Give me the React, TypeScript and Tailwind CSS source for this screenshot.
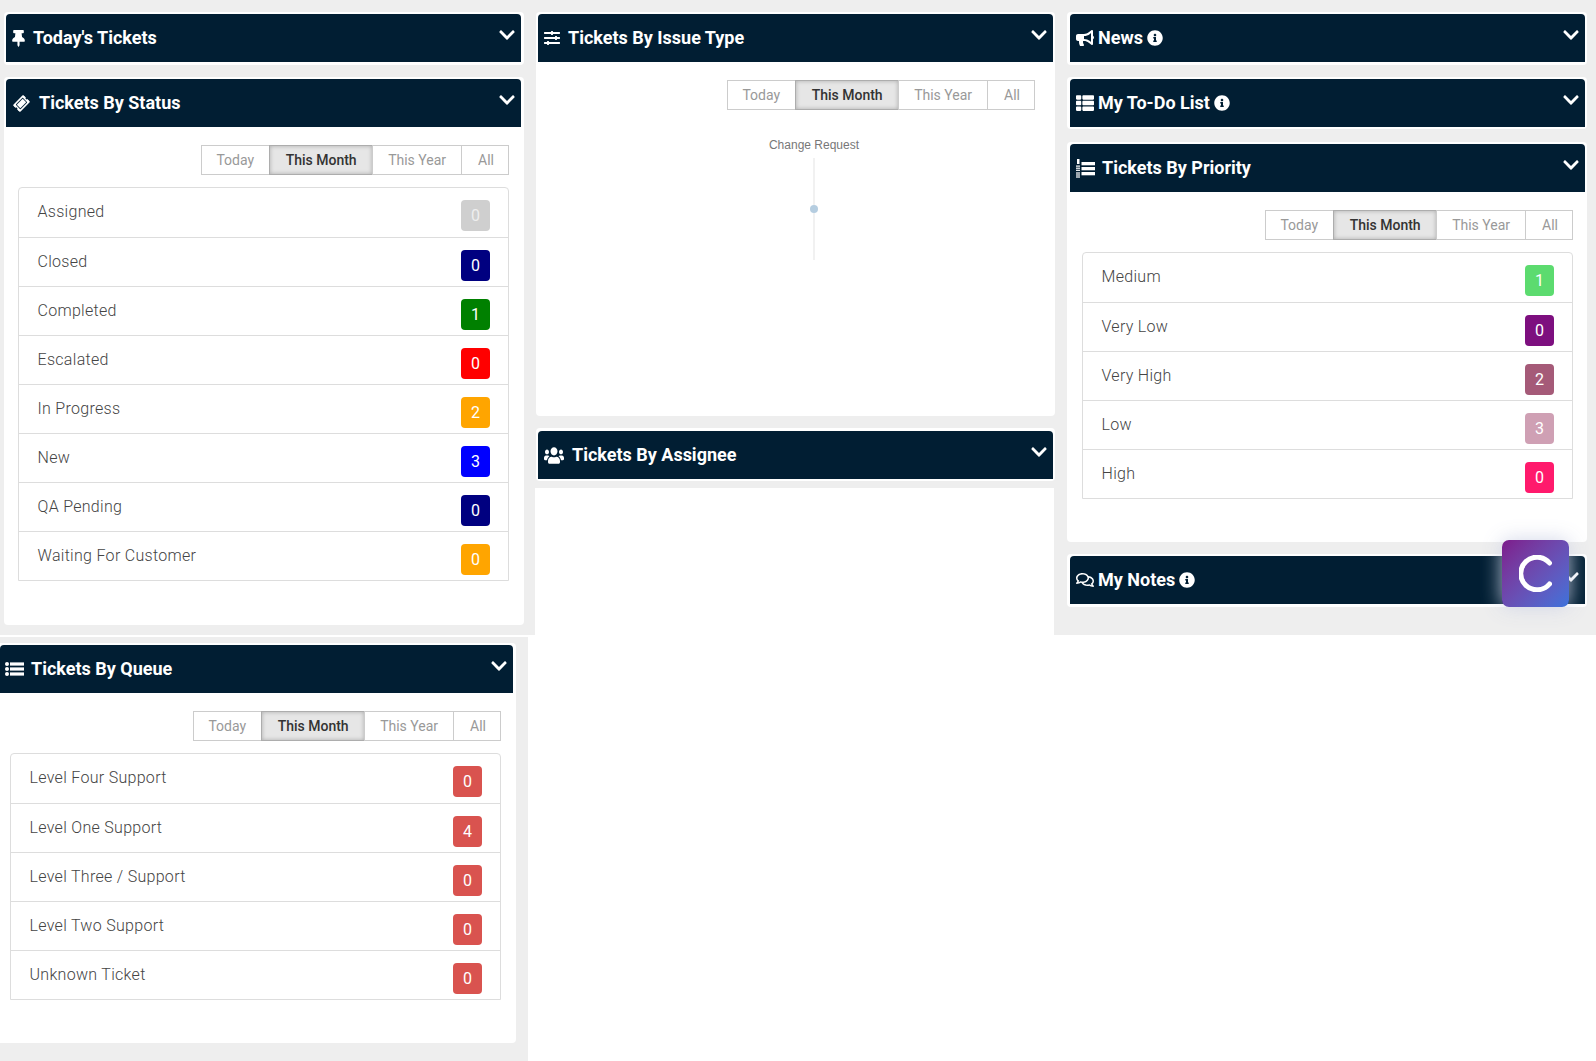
import React from "react";
import { FaThumbtack, FaTicketAlt, FaSlidersH, FaBullhorn, FaThList, FaInfoCircle, FaRegComments, FaUsers, FaChevronDown } from "react-icons/fa";

type Row = { label: string; count: number; color: string; text?: string };

const statusRows: Row[] = [
  { label: "Assigned", count: 0, color: "bg-[#cfcfcf]", text: "text-[#eeeeee]" },
  { label: "Closed", count: 0, color: "bg-[#000080]" },
  { label: "Completed", count: 1, color: "bg-[#008000]" },
  { label: "Escalated", count: 0, color: "bg-[#ff0000]" },
  { label: "In Progress", count: 2, color: "bg-[#ffa500]" },
  { label: "New", count: 3, color: "bg-[#0000ff]" },
  { label: "QA Pending", count: 0, color: "bg-[#000080]" },
  { label: "Waiting For Customer", count: 0, color: "bg-[#ffa500]" },
];

const priorityRows: Row[] = [
  { label: "Medium", count: 1, color: "bg-[#5cdb6f]" },
  { label: "Very Low", count: 0, color: "bg-[#7d0f7f]" },
  { label: "Very High", count: 2, color: "bg-[#a55a78]" },
  { label: "Low", count: 3, color: "bg-[#cfa0b4]" },
  { label: "High", count: 0, color: "bg-[#ff1a6c]" },
];

const queueRows: Row[] = [
  { label: "Level Four Support", count: 0, color: "bg-[#d9534f]" },
  { label: "Level One Support", count: 4, color: "bg-[#d9534f]" },
  { label: "Level Three / Support", count: 0, color: "bg-[#d9534f]" },
  { label: "Level Two Support", count: 0, color: "bg-[#d9534f]" },
  { label: "Unknown Ticket", count: 0, color: "bg-[#d9534f]" },
];

const ListUlIcon = () => (
  <svg width="19" height="14" viewBox="0 0 19 14" fill="white">
    <circle cx="2" cy="2" r="2" />
    <circle cx="2" cy="7" r="2" />
    <circle cx="2" cy="12" r="2" />
    <rect x="5" y="0.4" width="14" height="3.2" />
    <rect x="5" y="5.4" width="14" height="3.2" />
    <rect x="5" y="10.4" width="14" height="3.2" />
  </svg>
);

// bars plus the little stacked numerals of the old list-ol glyph
const ListOlIcon = () => (
  <svg width="19" height="19" viewBox="0 0 19 19" fill="white">
    <rect x="1" y="0" width="2.5" height="5" />
    <rect x="0" y="6.5" width="4" height="1.2" />
    <rect x="0" y="8.6" width="4" height="1.2" />
    <rect x="0" y="10.7" width="4" height="1.2" />
    <rect x="0" y="13.4" width="4" height="1.2" />
    <rect x="0" y="15.4" width="4" height="1.2" />
    <rect x="0" y="17.4" width="4" height="1.2" />
    <rect x="5.5" y="3" width="13.5" height="3.3" />
    <rect x="5.5" y="8" width="13.5" height="3.3" />
    <rect x="5.5" y="13" width="13.5" height="3.3" />
  </svg>
);

const PanelHeader = ({ icon, title, info, lead = "pl-[6px]", gap = "gap-[4px]" }: { icon: React.ReactNode; title: string; info?: boolean; lead?: string; gap?: string }) => (
  <div className={`h-[48px] bg-[#011e33] rounded-t-[4px] flex items-center pr-[5px] text-white ${lead}`}>
    <div className={`flex items-center ${gap}`}>
      {icon}
      <span className="text-[18px] font-bold pb-[2px]">{title}</span>
      {info && <FaInfoCircle className="h-[16px] w-[16px]" />}
    </div>
    <FaChevronDown className="ml-auto mb-[6px] h-[18px] w-[18px]" />
  </div>
);

const RangeTabs = () => (
  <div className="flex justify-end text-[14px] leading-[28px] h-[30px]">
    <span className="pl-[14.5px] pr-[15px] border border-[#cccccc] text-[#999999]">Today</span>
    <span className="px-[15.5px] border border-[#adadad] -ml-px bg-[#e6e6e6] text-[#333333] font-medium shadow-[inset_0_0_4px_rgba(0,0,0,0.25)]">This Month</span>
    <span className="px-[15px] border border-[#cccccc] -ml-px text-[#999999]">This Year</span>
    <span className="pl-[16px] pr-[14px] border border-[#cccccc] -ml-px text-[#999999]">All</span>
  </div>
);

const CountList = ({ rows }: { rows: Row[] }) => (
  <ul className="mt-[12px] border border-[#dddddd] rounded-t-[4px]">
    {rows.map((r, i) => (
      <li key={r.label} className={`h-[49px] flex justify-between pl-[18.5px] pr-[18px] pt-[12px] ${i > 0 ? "border-t border-[#dddddd]" : ""}`}>
        <span className="-mt-[0.5px] text-[16px] font-light leading-[24px] tracking-[0.3px] text-[#444444]">{r.label}</span>
        <span className={`w-[29px] h-[31px] rounded-[4px] flex items-center justify-center text-[16px] ${r.color} ${r.text ?? "text-white"}`}>{r.count}</span>
      </li>
    ))}
  </ul>
);

export default function App() {
  return (
    <div className="min-h-[1061px] bg-white font-['Roboto',sans-serif]">
      <div className="h-[635px] bg-[#eeeeee] flex pl-[4px] pt-[12px] relative">
        {/* left column */}
        <div className="w-[520px] flex flex-col shrink-0">
          <div className="bg-white rounded-[4px] pt-[2px] pb-[3px] pl-[2px] pr-[3px]">
            <PanelHeader icon={<FaThumbtack className="h-[17px] w-[13px]" />} title="Today's Tickets" gap="gap-[8px]" />
          </div>
          <div className="mt-[12px] bg-white rounded-[4px] pt-[2px] h-[548px]">
            <div className="pl-[2px] pr-[3px]">
              <PanelHeader icon={<FaTicketAlt className="h-[15px] w-[15px] -rotate-45" />} title="Tickets By Status" lead="pl-[8px]" gap="gap-[10px]" />
            </div>
            <div className="pl-[14px] pr-[15px] pt-[18px]">
              <RangeTabs />
              <CountList rows={statusRows} />
            </div>
          </div>
        </div>

        {/* middle column */}
        <div className="w-[519px] ml-[12px] flex flex-col shrink-0">
          <div className="bg-white rounded-[4px] h-[404px] pt-[2px]">
            <div className="px-[2px]">
              <PanelHeader icon={<FaSlidersH className="h-[16px] w-[16px]" />} title="Tickets By Issue Type" gap="gap-[8px]" />
            </div>
            <div className="pr-[20px] pt-[18px]">
              <RangeTabs />
            </div>
            <div className="flex flex-col items-center pl-[37px] pt-[28px]">
              <span className="text-[12px] leading-[14px] text-[#777777] font-['Liberation_Sans',sans-serif]">Change Request</span>
              <svg width="12" height="102" className="mt-[6px]">
                <line x1="6" y1="0" x2="6" y2="102" stroke="#ececec" strokeWidth="1.5" />
                <circle cx="6" cy="51" r="4" fill="#b5cde0" />
              </svg>
            </div>
          </div>
          <div className="mt-[12px] bg-white rounded-[4px] pt-[3px] pb-[2px] px-[2px]">
            <PanelHeader icon={<FaUsers className="h-[19px] w-[20px]" preserveAspectRatio="none" />} title="Tickets By Assignee" gap="gap-[8px]" />
          </div>
          <div className="flex-1 mt-[7px] bg-white -ml-[1px] mr-[1px]" />
        </div>

        {/* right column */}
        <div className="w-[520px] ml-[12px] flex flex-col shrink-0">
          <div className="bg-white rounded-[4px] pt-[2px] pb-[3px] pl-[3px] pr-[2px]">
            <PanelHeader icon={<FaBullhorn className="h-[18px] w-[18px]" />} title="News" info />
          </div>
          <div className="mt-[12px] bg-white rounded-[4px] pt-[2px] pb-[2px] pl-[3px] pr-[2px]">
            <PanelHeader icon={<FaThList className="h-[18px] w-[18px]" />} title="My To-Do List" info />
          </div>
          <div className="mt-[13px] bg-white rounded-[4px] pt-[2px] h-[400px]">
            <div className="pl-[3px] pr-[2px]">
              <PanelHeader icon={<ListOlIcon />} title="Tickets By Priority" gap="gap-[7px]" />
            </div>
            <div className="pl-[15px] pr-[14px] pt-[18px]">
              <RangeTabs />
              <CountList rows={priorityRows} />
            </div>
          </div>
          <div className="mt-[12px] bg-white rounded-[4px] pt-[2px] pb-[3px] pl-[3px] pr-[2px]">
            <PanelHeader icon={<FaRegComments className="h-[18px] w-[18px]" />} title="My Notes" info />
          </div>
        </div>

        {/* floating launcher */}
        <div className="absolute left-[1502px] top-[540px] w-[67px] h-[67px] rounded-[7px] bg-gradient-to-br from-[#7d1a8c] to-[#3a72db] shadow-[0_0_20px_rgba(205,210,230,0.9)] flex items-center justify-center">
          <svg width="33" height="37" viewBox="0 0 33 37" fill="none">
            <path d="M30.5 8 A 16.3 16.3 0 1 0 30.5 29" stroke="white" strokeWidth="5" strokeLinecap="round" />
          </svg>
        </div>
      </div>

      {/* queue row */}
      <div className="mt-[2px] w-[528px] h-[424px] bg-[#eeeeee] pt-[6px]">
        <div className="w-[516px] h-[400px] bg-white rounded-r-[4px] pt-[2px]">
          <div className="pr-[3px]">
            <PanelHeader icon={<ListUlIcon />} title="Tickets By Queue" lead="pl-[4.5px]" gap="gap-[7.5px]" />
          </div>
          <div className="pl-[10px] pr-[15px] pt-[18px]">
            <RangeTabs />
            <CountList rows={queueRows} />
          </div>
        </div>
      </div>
    </div>
  );
}
